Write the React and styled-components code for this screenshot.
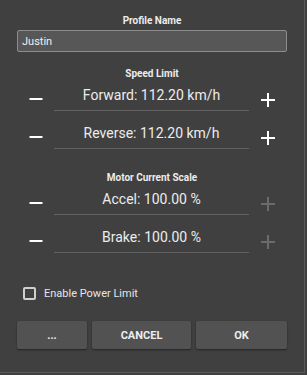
import React, { useState } from 'react'
import styled, { createGlobalStyle } from 'styled-components'

const Global = createGlobalStyle`
body {
  margin: 0;
  background: #404040;
  font-family: Roboto, "Liberation Sans", sans-serif;
}
`
const Dialog = styled.div`
width: 305px;
height: 373px;
box-sizing: border-box;
background: #404040;
border-right: 1px solid #5a5a5a;
border-bottom: 1px solid #5a5a5a;
padding: 0 17px 0 17px;
display: flex;
flex-direction: column;
color: #ececec;
`
const Title = styled.div`
font-size: 10px;
font-weight: 700;
line-height: 10px;
text-align: center;
margin-top: ${props => props.top}px;
`
const Input = styled.input`
margin-top: 4px;
height: 22px;
box-sizing: border-box;
width: 100%;
background: #575757;
border: 1px solid #8c8c8c;
border-radius: 2px;
color: #f0f0f0;
font-family: Roboto, "Liberation Sans", sans-serif;
font-size: 11px;
padding: 0 4px;
outline: none;
`
const Row = styled.div`
display: grid;
grid-template-columns: 37px 1fr 38px;
height: 38px;
`
const IconButton = styled.div`
display: flex;
justify-content: center;
padding-top: ${props => props.top}px;
color: ${props => (props.disabled ? '#6b6b6b' : '#ffffff')};
`
const Field = styled.div`
height: 31px;
border-bottom: 1px solid #626262;
display: flex;
align-items: center;
justify-content: center;
font-size: 14px;
color: #ececec;
`
const Check = styled.label`
display: flex;
align-items: center;
gap: 8px;
margin-top: 28px;
padding-left: 6px;
font-size: 11px;
color: #e6e6e6;
`
const Box = styled.span`
width: 13px;
height: 13px;
box-sizing: border-box;
border: 2px solid ${props => (props.checked ? '#4fa3e0' : '#cfcfcf')};
background: ${props => (props.checked ? '#4fa3e0' : 'transparent')};
border-radius: 2px;
`
const Buttons = styled.div`
display: grid;
grid-template-columns: 70px 99px 1fr;
gap: 5px;
margin-top: 21px;
`
const Button = styled.button`
height: 28px;
background: #525252;
border: none;
border-radius: 2px;
box-shadow: 0 1px 2px rgba(0, 0, 0, 0.45);
color: #eeeeee;
font-family: Roboto, "Liberation Sans", sans-serif;
font-size: 11px;
font-weight: 700;
`

const Minus = () => (
  <svg width="14" height="14" viewBox="0 0 14 14">
    <rect x="0.5" y="6" width="13" height="2" fill="currentColor" />
  </svg>
)
const Plus = () => (
  <svg width="14" height="14" viewBox="0 0 14 14">
    <rect x="0" y="6" width="14" height="2" fill="currentColor" />
    <rect x="6" y="0" width="2" height="14" fill="currentColor" />
  </svg>
)

const Stepper = ({ label, value, unit, step, max }) => {
  const [val, setVal] = useState(value)
  const atMax = max !== undefined && val >= max
  return (
    <Row>
      <IconButton top={13} onClick={() => setVal(val - step)}>
        <Minus />
      </IconButton>
      <Field>{label}: {val.toFixed(2)} {unit}</Field>
      <IconButton top={14} disabled={atMax} onClick={() => !atMax && setVal(val + step)}>
        <Plus />
      </IconButton>
    </Row>
  )
}

const App = () => {
  const [name, setName] = useState('Justin')
  const [power, setPower] = useState(false)
  return (
    <Dialog>
      <Global />
      <Title top={16}>Profile Name</Title>
      <Input value={name} onChange={e => setName(e.target.value)} />
      <Title top={17}>Speed Limit</Title>
      <Stepper label="Forward" value={112.2} unit="km/h" step={1} />
      <Stepper label="Reverse" value={112.2} unit="km/h" step={1} />
      <Title top={18}>Motor Current Scale</Title>
      <Stepper label="Accel" value={100} unit="%" step={1} max={100} />
      <Stepper label="Brake" value={100} unit="%" step={1} max={100} />
      <Check onClick={() => setPower(!power)}>
        <Box checked={power} />
        Enable Power Limit
      </Check>
      <Buttons>
        <Button>...</Button>
        <Button>CANCEL</Button>
        <Button>OK</Button>
      </Buttons>
    </Dialog>
  )
}

export default App
